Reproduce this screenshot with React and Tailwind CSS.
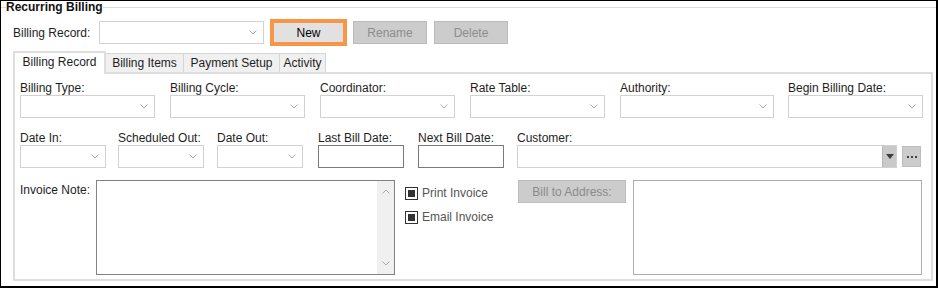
import React from "react";

function Chevron({ up }) {
  return (
    <svg width="8" height="5" viewBox="0 0 8 5" className="block">
      <path
        d={up ? "M0.5 4.5 L4 1 L7.5 4.5" : "M0.5 0.5 L4 4 L7.5 0.5"}
        stroke="#ababab"
        strokeWidth="1"
        fill="none"
      />
    </svg>
  );
}

function Combo({ className }) {
  return (
    <div
      className={`${className} h-[23px] border border-[#d2d2d2] bg-white flex items-center justify-end pr-[6px]`}
    >
      <Chevron />
    </div>
  );
}

function Field({ label, width, children }) {
  return (
    <div className={`${width} shrink-0`}>
      <div className="h-[14px] leading-[14px] text-[#1e1e1e] whitespace-nowrap">{label}</div>
      {children}
    </div>
  );
}

function CheckBox({ label }) {
  return (
    <div className="flex items-center h-[14px]">
      <div className="w-[13px] h-[13px] border border-[#333] bg-white flex items-center justify-center">
        <div className="w-[7px] h-[7px] bg-[#333]"></div>
      </div>
      <span className="ml-[4px] leading-[14px] text-[#555]">{label}</span>
    </div>
  );
}

export default function App() {
  return (
    <div
      className="w-[938px] h-[288px] overflow-hidden bg-white border-l border-t border-r-2 border-b-2 border-black text-[12px]"
      style={{ fontFamily: '"Liberation Sans", Arial, sans-serif' }}
    >
      <fieldset className="border-t border-[#dcdcdc] min-w-0">
        <legend className="ml-[5px] px-0 font-bold leading-[12px] text-[#111]">Recurring Billing</legend>

        <div className="pl-[12px] pt-[6px]">
          {/* Billing record selector */}
          <div className="flex items-center h-[27px]">
            <div className="w-[86px] leading-[14px] text-[#1e1e1e]">Billing Record:</div>
            <Combo className="w-[165px]" />
            <div className="ml-[6px] w-[77px] h-[27px] border-4 border-[#f79646] bg-[#e1e1e1] flex items-center justify-center text-black">
              New
            </div>
            <div className="ml-[6px] w-[74px] h-[23px] border border-[#bbbbbb] bg-[#cccccc] flex items-center justify-center text-[#8c8c8c]">
              Rename
            </div>
            <div className="ml-[7px] w-[74px] h-[23px] border border-[#bbbbbb] bg-[#cccccc] flex items-center justify-center text-[#8c8c8c]">
              Delete
            </div>
          </div>

          {/* Tabs */}
          <div className="mt-[5px] flex items-end">
            <div className="relative z-10 -mb-[2px] w-[93px] h-[23px] border-2 border-b-0 border-[#dedede] bg-white flex justify-center pt-[2px] leading-[14px] text-[#1e1e1e]">
              Billing Record
            </div>
            <div className="w-[78px] h-[19px] border-t border-r border-[#d6d6d6] bg-[#f0f0f0] flex items-center justify-center text-[#1e1e1e]">
              Billing Items
            </div>
            <div className="w-[96px] h-[19px] border-t border-r border-[#d6d6d6] bg-[#f0f0f0] flex items-center justify-center text-[#1e1e1e]">
              Payment Setup
            </div>
            <div className="w-[46px] h-[19px] border-t border-r border-[#d6d6d6] bg-[#f0f0f0] flex items-center justify-center text-[#1e1e1e]">
              Activity
            </div>
          </div>

          {/* Tab panel */}
          <div className="w-[920px] border-2 border-[#dedede] pl-[5px] pt-[7px] pb-[4px]">
            <div className="flex">
              <Field label="Billing Type:" width="w-[150px]">
                <Combo className="w-[135px]" />
              </Field>
              <Field label="Billing Cycle:" width="w-[150px]">
                <Combo className="w-[135px]" />
              </Field>
              <Field label="Coordinator:" width="w-[150px]">
                <Combo className="w-[135px]" />
              </Field>
              <Field label="Rate Table:" width="w-[150px]">
                <Combo className="w-[135px]" />
              </Field>
              <Field label="Authority:" width="w-[168px]">
                <Combo className="w-[154px]" />
              </Field>
              <Field label="Begin Billing Date:" width="w-[135px]">
                <Combo className="w-[135px]" />
              </Field>
            </div>

            <div className="mt-[13px] flex">
              <Field label="Date In:" width="w-[98px]">
                <Combo className="w-[86px]" />
              </Field>
              <Field label="Scheduled Out:" width="w-[99px]">
                <Combo className="w-[86px]" />
              </Field>
              <Field label="Date Out:" width="w-[101px]">
                <Combo className="w-[86px]" />
              </Field>
              <Field label="Last Bill Date:" width="w-[100px]">
                <div className="w-[86px] h-[23px] border border-[#7a7a7a] bg-white"></div>
              </Field>
              <Field label="Next Bill Date:" width="w-[99px]">
                <div className="w-[86px] h-[23px] border border-[#7a7a7a] bg-white"></div>
              </Field>
              <Field label="Customer:" width="w-[404px]">
                <div className="flex items-center">
                  <div className="w-[380px] h-[23px] border border-[#d2d2d2] bg-white flex items-center justify-end">
                    <div className="w-[14px] h-[21px] border-l border-[#b5b5b5] bg-[#c9c9c9] flex items-center justify-center">
                      <svg width="8" height="5" viewBox="0 0 8 5">
                        <path d="M0 0 H8 L4 5 Z" fill="#3c3c3c" />
                      </svg>
                    </div>
                  </div>
                  <div className="ml-[5px] w-[19px] h-[21px] border border-[#bdbdbd] bg-[#cccccc] flex items-center justify-center gap-[2px]">
                    <div className="w-[2px] h-[2px] bg-[#444]"></div>
                    <div className="w-[2px] h-[2px] bg-[#444]"></div>
                    <div className="w-[2px] h-[2px] bg-[#444]"></div>
                  </div>
                </div>
              </Field>
            </div>

            <div className="mt-[12px] flex items-start">
              <div className="w-[76px] pt-[3px] leading-[14px] text-[#1e1e1e]">Invoice Note:</div>
              <div className="w-[299px] h-[95px] border border-[#828282] bg-white flex justify-end">
                <div className="w-[17px] h-full bg-[#f0f0f0] flex flex-col items-center justify-between py-[8px]">
                  <Chevron up />
                  <Chevron />
                </div>
              </div>
              <div className="ml-[10px] w-[113px] pt-[6px] flex flex-col gap-[10px]">
                <CheckBox label="Print Invoice" />
                <CheckBox label="Email Invoice" />
              </div>
              <div className="w-[108px] h-[23px] border border-[#bdbdbd] bg-[#cccccc] flex items-center justify-center text-[#8a8a8a]">
                Bill to Address:
              </div>
              <div className="ml-[7px] w-[289px] h-[95px] border border-[#adadad] bg-white"></div>
            </div>
          </div>
        </div>
      </fieldset>
    </div>
  );
}
